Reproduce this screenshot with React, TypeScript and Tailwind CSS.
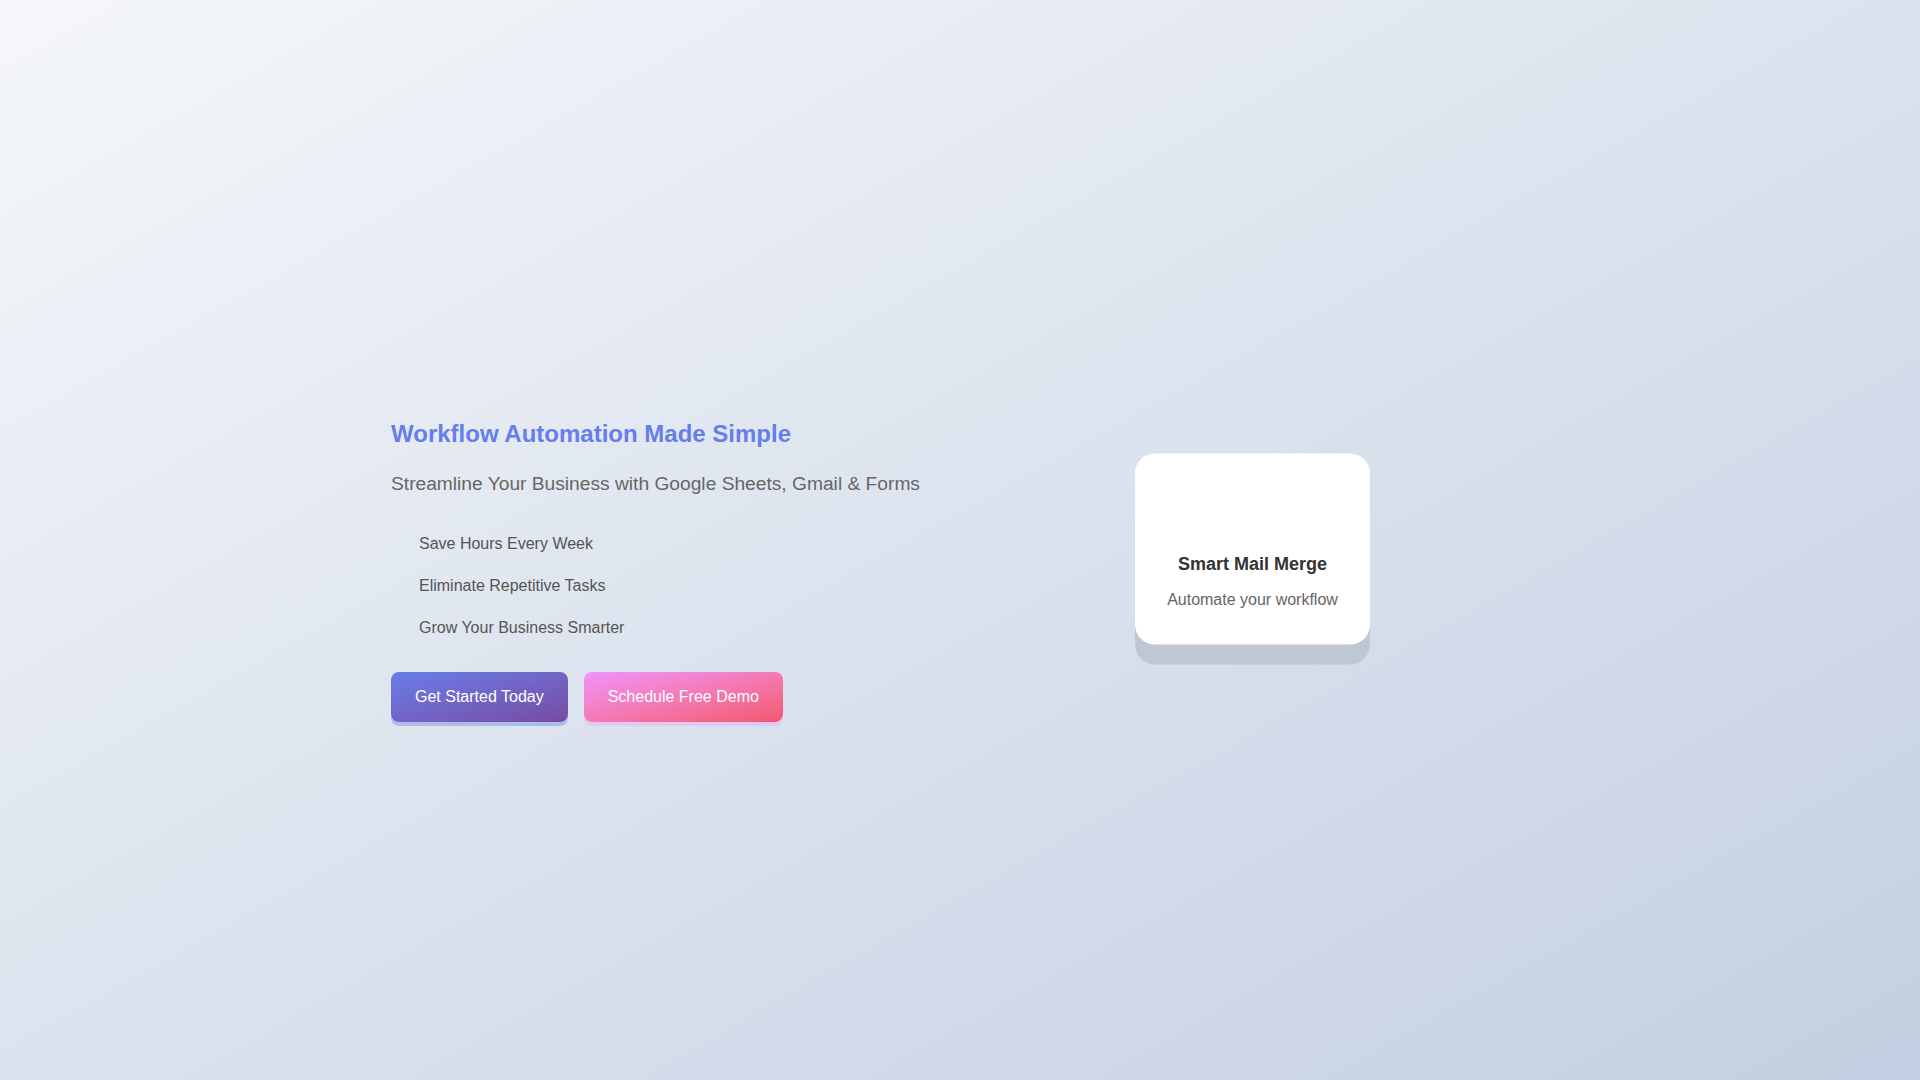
import React from 'react';

const features: Array<string> = [
  'Save Hours Every Week',
  'Eliminate Repetitive Tasks',
  'Grow Your Business Smarter',
];

function HeroCopy() {
  return (
    <div className="flex flex-col items-start">
      <h1 className="mb-6 text-[24px] leading-[29px] font-bold text-[#667eea]">
        Workflow Automation Made Simple
      </h1>
      <p className="mb-[27px] whitespace-nowrap text-[19.2px] leading-[24px] text-[#666]">
        Streamline Your Business with Google Sheets, Gmail &amp; Forms
      </p>
      <ul className="flex flex-col">
        {features.map((feature) => (
          <li key={feature} className="py-3 pl-7 text-[16px] leading-[18px] text-[#555]">
            {feature}
          </li>
        ))}
      </ul>
      <div className="mt-[23px] flex gap-4">
        <button
          type="button"
          className="rounded-lg bg-gradient-to-br from-[#667eea] to-[#764ba2] px-6 py-4 text-[16px] leading-[18px] text-white shadow-[0_4px_0_rgba(102,126,234,0.4)]"
        >
          Get Started Today
        </button>
        <button
          type="button"
          className="rounded-lg bg-gradient-to-br from-[#f093fb] to-[#f5576c] px-6 py-4 text-[16px] leading-[18px] text-white shadow-[0_4px_0_rgba(240,147,251,0.3)]"
        >
          Schedule Free Demo
        </button>
      </div>
    </div>
  );
}

function FeatureCard() {
  return (
    <div className="justify-self-center -translate-y-[21.5px] rounded-[20px] bg-white px-8 pt-8 pb-9 text-center shadow-[0_20px_0_#c0c7d4]">
      {/* icon slot */}
      <div className="h-[68px]" />
      <h3 className="text-[18px] leading-[21px] font-bold text-[#333]">Smart Mail Merge</h3>
      <p className="mt-4 text-[16px] leading-[18px] text-[#666]">Automate your workflow</p>
    </div>
  );
}

export default function App() {
  return (
    <div className="font-['Liberation_Sans',Arial,sans-serif]">
      <section className="flex h-screen items-center bg-gradient-to-br from-[#f5f7fa] to-[#c3cfe2] pt-[61px]">
        <div className="mx-auto grid w-full max-w-[1200px] grid-cols-2 items-center gap-8 px-[31px]">
          <HeroCopy />
          <FeatureCard />
        </div>
      </section>
    </div>
  );
}
